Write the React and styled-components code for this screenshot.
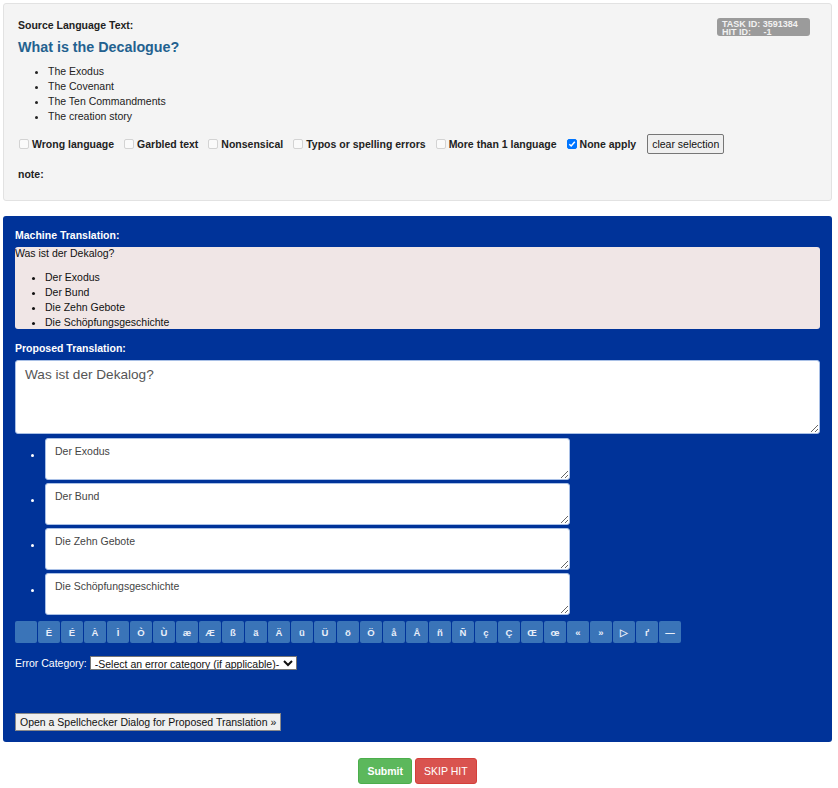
import React from 'react';
import styled, { createGlobalStyle } from 'styled-components';

const GlobalStyle = createGlobalStyle`
  body {
    margin: 0;
    background: #fff;
    font-family: "Liberation Sans", Arial, sans-serif;
  }
`;

const Page = styled.div`
  padding: 3px 6px 0 3px;
  width: 829px;
`;

const SourcePanel = styled.div`
  position: relative;
  background: #f4f4f4;
  border: 1px solid #e2e2e2;
  border-radius: 3px;
  padding: 15px 14px 19px 14px;
`;

const Label = styled.div`
  font-size: 10.5px;
  font-weight: bold;
  line-height: 13px;
  color: ${p => (p.light ? '#fff' : '#222')};
  margin-top: ${p => p.top || 0}px;
`;

const Title = styled.div`
  font-size: 14.3px;
  font-weight: bold;
  line-height: 17px;
  color: #23618f;
  margin-top: 7px;
`;

const SourceList = styled.ul`
  margin: 8px 0 0 0;
  padding-left: 30px;
  font-size: 10.5px;
  line-height: 15px;
  color: #222;
`;

const Badge = styled.div`
  position: absolute;
  top: 14px;
  right: 21px;
  width: 93px;
  height: 18px;
  padding: 2px 0 0 5px;
  box-sizing: border-box;
  background: #9b9b9b;
  border-radius: 3px;
  color: #f2f2f2;
  font-size: 9px;
  font-weight: bold;
  line-height: 8px;
  white-space: pre;
`;

const CheckRow = styled.div`
  display: flex;
  align-items: center;
  height: 20px;
  margin-top: 10px;
  margin-left: 1px;
`;

const CheckItem = styled.label`
  display: flex;
  align-items: center;
  font-size: 10.5px;
  font-weight: bold;
  color: #222;
  margin-right: 10px;
`;

const Box = styled.span`
  width: 10px;
  height: 10px;
  box-sizing: border-box;
  border: 1px solid ${p => (p.checked ? '#0075ff' : '#d3d3d3')};
  background: ${p => (p.checked ? '#0075ff' : '#fafafa')};
  border-radius: 2px;
  margin-right: 3px;
  display: flex;
  align-items: center;
  justify-content: center;
`;

const ClearButton = styled.button`
  font-family: "Liberation Sans", Arial, sans-serif;
  font-size: 10.5px;
  height: 20px;
  padding: 0 4px;
  background: #efefef;
  border: 1px solid #767676;
  border-radius: 2px;
  color: #111;
  margin-left: 1px;
`;

const TargetPanel = styled.div`
  background: #003399;
  border-radius: 3px;
  margin-top: 15px;
  padding: 13px 12px 11px 12px;
`;

const MachineBox = styled.div`
  margin-top: 5px;
  height: 82px;
  overflow: hidden;
  background: #f0e6e6;
  border-radius: 3px;
  font-size: 10.5px;
  line-height: 12px;
  color: #111;
`;

const MachineList = styled.ul`
  margin: 11px 0 0 0;
  padding-left: 30px;
  line-height: 15px;
`;

const BigArea = styled.textarea`
  display: block;
  box-sizing: border-box;
  width: 805px;
  height: 74px;
  margin-top: 5px;
  padding: 6px 9px;
  border: 1px solid #a9c0e6;
  border-radius: 3px;
  font-family: "Liberation Sans", Arial, sans-serif;
  font-size: 13.6px;
  color: #555;
  resize: vertical;
`;

const Items = styled.div`
  margin-top: 4px;
  padding-left: 16px;
`;

const ItemRow = styled.div`
  display: flex;
  align-items: center;
  margin-bottom: 3px;
`;

const Dot = styled.span`
  width: 3px;
  height: 3px;
  background: #fff;
  border-radius: 50%;
  margin: 0 11px 8px 0;
`;

const SmallArea = styled.textarea`
  box-sizing: border-box;
  width: 525px;
  height: 42px;
  padding: 6px 9px;
  border: 1px solid #a9c0e6;
  border-radius: 3px;
  font-family: "Liberation Sans", Arial, sans-serif;
  font-size: 10.5px;
  color: #444;
  resize: vertical;
`;

const CharBar = styled.div`
  display: flex;
  gap: 1px;
  margin-top: 6px;
`;

const CharButton = styled.button`
  min-width: 22px;
  height: 22px;
  padding: 0 5px;
  background: #3a74b8;
  border: none;
  border-radius: 2px;
  color: #e8eef8;
  font-family: "Liberation Sans", Arial, sans-serif;
  font-size: 9.5px;
  font-weight: bold;
`;

const CategoryRow = styled.div`
  display: flex;
  align-items: center;
  margin-top: 13px;
  font-size: 10.5px;
  color: #fff;
`;

const Select = styled.select`
  margin-left: 3px;
  height: 14px;
  padding: 0;
  font-family: "Liberation Sans", Arial, sans-serif;
  font-size: 10.5px;
  border: 1px solid #767676;
  border-radius: 0;
  background: #fff;
  color: #111;
`;

const SpellButton = styled.button`
  margin-top: 43px;
  height: 18px;
  padding: 0 4px;
  font-family: "Liberation Sans", Arial, sans-serif;
  font-size: 10.5px;
  background: #efefef;
  border: 1px solid #8a8a8a;
  border-radius: 0;
  color: #111;
`;

const Actions = styled.div`
  display: flex;
  justify-content: center;
  gap: 3px;
  margin-top: 16px;
`;

const ActionButton = styled.button`
  height: 26px;
  padding: 0 8px;
  border: 1px solid ${p => (p.danger ? '#d43f3a' : '#4cae4c')};
  border-radius: 3px;
  background: ${p => (p.danger ? '#d9534f' : '#5cb85c')};
  color: #fff;
  font-family: "Liberation Sans", Arial, sans-serif;
  font-size: 10.5px;
  font-weight: ${p => (p.danger ? 'normal' : 'bold')};
`;

const issues = ['Wrong language', 'Garbled text', 'Nonsensical', 'Typos or spelling errors', 'More than 1 language', 'None apply'];
const sourceItems = ['The Exodus', 'The Covenant', 'The Ten Commandments', 'The creation story'];
const targetItems = ['Der Exodus', 'Der Bund', 'Die Zehn Gebote', 'Die Schöpfungsgeschichte'];
const chars = ['', 'È', 'É', 'À', 'Ì', 'Ò', 'Ù', 'æ', 'Æ', 'ß', 'ä', 'Ä', 'ü', 'Ü', 'ö', 'Ö', 'å', 'Å', 'ñ', 'Ñ', 'ç', 'Ç', 'Œ', 'œ', '«', '»', '▷', 'ґ', '—'];

export default function App() {
  return (
    <Page>
      <GlobalStyle />
      <SourcePanel>
        <Badge>{'TASK ID: 3591384\nHIT ID:     -1'}</Badge>
        <Label>Source Language Text:</Label>
        <Title>What is the Decalogue?</Title>
        <SourceList>
          {sourceItems.map(s => <li key={s}>{s}</li>)}
        </SourceList>
        <CheckRow>
          {issues.map(s => {
            const on = s === 'None apply';
            return (
              <CheckItem key={s}>
                <Box checked={on}>
                  {on && (
                    <svg width="8" height="8" viewBox="0 0 8 8">
                      <path d="M1.3 4.2 L3.2 6 L6.8 1.8" stroke="#fff" strokeWidth="1.5" fill="none" />
                    </svg>
                  )}
                </Box>
                {s}
              </CheckItem>
            );
          })}
          <ClearButton>clear selection</ClearButton>
        </CheckRow>
        <Label top={14}>note:</Label>
      </SourcePanel>

      <TargetPanel>
        <Label light>Machine Translation:</Label>
        <MachineBox>
          Was ist der Dekalog?
          <MachineList>
            {targetItems.map(s => <li key={s}>{s}</li>)}
          </MachineList>
        </MachineBox>
        <Label light top={13}>Proposed Translation:</Label>
        <BigArea defaultValue="Was ist der Dekalog?" />
        <Items>
          {targetItems.map(s => (
            <ItemRow key={s}>
              <Dot />
              <SmallArea defaultValue={s} />
            </ItemRow>
          ))}
        </Items>
        <CharBar>
          {chars.map((c, i) => <CharButton key={i}>{c}</CharButton>)}
        </CharBar>
        <CategoryRow>
          Error Category:
          <Select defaultValue="">
            <option value="">-Select an error category (if applicable)-</option>
          </Select>
        </CategoryRow>
        <SpellButton>Open a Spellchecker Dialog for Proposed Translation »</SpellButton>
      </TargetPanel>

      <Actions>
        <ActionButton>Submit</ActionButton>
        <ActionButton danger>SKIP HIT</ActionButton>
      </Actions>
    </Page>
  );
}
